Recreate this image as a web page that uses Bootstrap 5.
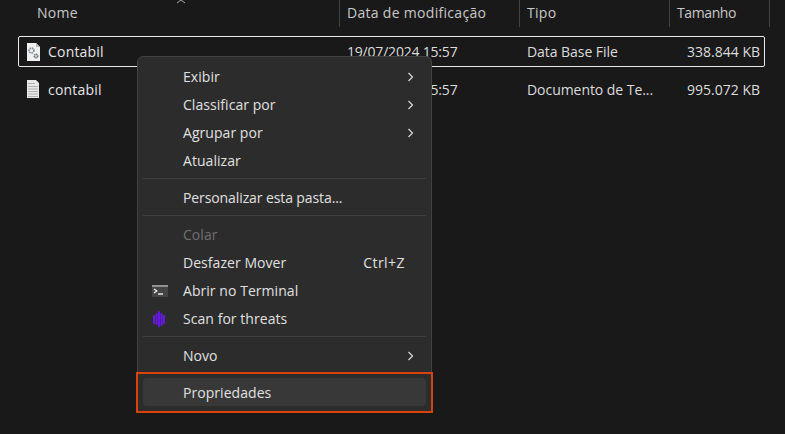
<!DOCTYPE html>
<html lang="pt">
<head>
<meta charset="utf-8">
<title>Contexto</title>
<link href="https://cdn.jsdelivr.net/npm/bootstrap@5.3.0/dist/css/bootstrap.min.css" rel="stylesheet">
<style>
html,body{height:434px;overflow:hidden}
body{background:#191919;color:#dcdcdc;font-family:"Open Sans","Noto Sans",sans-serif;font-size:14px;letter-spacing:-.2px;line-height:20px;position:relative}
.hdr{height:27px;padding-left:29px;width:770px}
.hc{padding-left:8px;height:27px;line-height:26px;color:#c8c8c8;border-right:1px solid #444;letter-spacing:.3px;position:relative;flex:none}
.c1{width:311px}.c2{width:180px;padding-left:7px}.c3{width:150px;padding-left:7px}.c4{width:100px;padding-left:7px;letter-spacing:-.4px}
.sort{position:absolute;left:147px;top:0}
.frow{height:31px;margin-left:18px;width:747px;border:1px solid transparent;flex:none}
.frow.sel{border-color:#e8e8e8;border-radius:2px;margin-top:9px}
.frow+.frow{margin-top:7px}
.fic{width:18px;margin-left:6px;margin-right:5px;flex:none;display:block}
.fn{width:299px;color:#e6e6e6;flex:none;letter-spacing:.2px}
.fd{width:180px;flex:none}
.ft{width:150px;flex:none;letter-spacing:-.05px}
.fs{width:83px;text-align:right;flex:none;letter-spacing:0}
.menu-box{position:absolute;left:137px;top:56px;width:295px;height:356px;background:#2c2c2c;border:1px solid #424242;border-radius:6px 6px 0 0;padding:6px 5px 0;letter-spacing:.05px}
.mi{height:28px;padding-left:40px;padding-right:12px;color:#e0e0e0;position:relative;border-radius:4px}
.mi.off{color:#6f6f6f}
.mi.act{background:#383838;margin-top:8px;padding-top:2px}
.mi.tight{letter-spacing:-.1px}
.mi-ico{position:absolute;left:9px;top:50%;transform:translateY(-50%);display:block}
.kb{letter-spacing:.45px;margin-right:9px}
.chev{display:block}
.sepr{height:1px;background:#404040;margin:3px 0 5px}
.redb{position:absolute;left:136px;top:372px;width:297px;height:41px;border:2px solid #d9430b;pointer-events:none}
</style>
</head>
<body>
<div class="hdr d-flex">
  <div class="hc c1">Nome<svg class="sort" width="10" height="4" viewBox="0 0 10 4"><path d="M1 3 5 0 9 3" fill="none" stroke="#aaa" stroke-width="1"/></svg></div>
  <div class="hc c2">Data de modificação</div>
  <div class="hc c3">Tipo</div>
  <div class="hc c4">Tamanho</div>
</div>
<div class="frow sel d-flex align-items-center">
  <svg class="fic" width="18" height="20" viewBox="0 0 18 20"><path d="M2 1h9l4 4v14H2z" fill="#f1f1f1"/><path d="M11 1v4h4" fill="#b8b8b8"/><circle cx="6.500" cy="8.500" r="2.400" fill="none" stroke="#8d939a" stroke-width="1.800" stroke-dasharray="1.500 .6"/><circle cx="11" cy="14" r="1.700" fill="none" stroke="#6a7077" stroke-width="1.600" stroke-dasharray="1.300 .5"/></svg>
  <div class="fn">Contabil</div>
  <div class="fd">19/07/2024 15:57</div>
  <div class="ft">Data Base File</div>
  <div class="fs">338.844 KB</div>
</div>
<div class="frow d-flex align-items-center">
  <svg class="fic" width="18" height="20" viewBox="0 0 18 20"><path d="M2 0h9l3 3v15H2z" fill="#e9e9e9"/><path d="M3 3.500h7M3 6.500h10M3 9h10M3 11.500h10M3 14h10M3 16.500h10" stroke="#b0b0b0" stroke-width="1"/></svg>
  <div class="fn">contabil</div>
  <div class="fd">19/07/2024 15:57</div>
  <div class="ft">Documento de Te...</div>
  <div class="fs">995.072 KB</div>
</div>
<div class="menu-box">
  <div class="mi d-flex align-items-center justify-content-between">Exibir<svg class="chev" width="7" height="10" viewBox="0 0 7 10"><path d="M1.500 1 5.500 5 1.500 9" fill="none" stroke="#d8d8d8" stroke-width="1.200"/></svg></div>
  <div class="mi d-flex align-items-center justify-content-between">Classificar por<svg class="chev" width="7" height="10" viewBox="0 0 7 10"><path d="M1.500 1 5.500 5 1.500 9" fill="none" stroke="#d8d8d8" stroke-width="1.200"/></svg></div>
  <div class="mi d-flex align-items-center justify-content-between">Agrupar por<svg class="chev" width="7" height="10" viewBox="0 0 7 10"><path d="M1.500 1 5.500 5 1.500 9" fill="none" stroke="#d8d8d8" stroke-width="1.200"/></svg></div>
  <div class="mi d-flex align-items-center">Atualizar</div>
  <div class="sepr"></div>
  <div class="mi tight d-flex align-items-center">Personalizar esta pasta...</div>
  <div class="sepr"></div>
  <div class="mi off d-flex align-items-center">Colar</div>
  <div class="mi d-flex align-items-center justify-content-between">Desfazer Mover<span class="kb">Ctrl+Z</span></div>
  <div class="mi d-flex align-items-center">
    <svg class="mi-ico" width="16" height="12" viewBox="0 0 16 12"><rect width="16" height="12" fill="#444"/><rect width="16" height="2" fill="#8f8f8f"/><path d="M2 4 4.800 6 2 8" fill="none" stroke="#f0f0f0" stroke-width="1.300"/><path d="M6 9h5" stroke="#f0f0f0" stroke-width="1.400"/></svg>
    Abrir no Terminal</div>
  <div class="mi d-flex align-items-center">
    <svg class="mi-ico" width="14" height="16" viewBox="0 0 14 16"><g fill="#6418e6"><rect x="1" y="4" width="2" height="9" rx="1"/><rect x="3.500" y="2" width="2" height="12" rx="1"/><rect x="6" y="0" width="2.200" height="16" rx="1"/><rect x="8.700" y="2" width="2" height="13" rx="1"/><rect x="11" y="4" width="2" height="9" rx="1"/></g></svg>
    Scan for threats</div>
  <div class="sepr"></div>
  <div class="mi d-flex align-items-center justify-content-between">Novo<svg class="chev" width="7" height="10" viewBox="0 0 7 10"><path d="M1.500 1 5.500 5 1.500 9" fill="none" stroke="#d8d8d8" stroke-width="1.200"/></svg></div>
  <div class="mi act d-flex align-items-center">Propriedades</div>
</div>
<div class="redb"></div>
<script src="https://cdn.jsdelivr.net/npm/bootstrap@5.3.0/dist/js/bootstrap.bundle.min.js"></script>
</body>
</html>
